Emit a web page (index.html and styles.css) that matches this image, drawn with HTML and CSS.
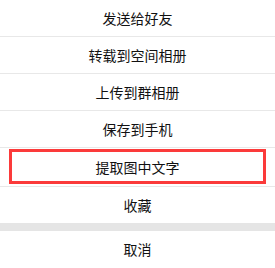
FILE: index.html
```html
<!DOCTYPE html>
<html lang="zh-CN">
<head>
    <meta charset="UTF-8">
    <meta name="viewport" content="width=device-width, initial-scale=1.0">
    <title>操作菜单</title>
    <link rel="stylesheet" href="styles.css">
</head>
<body>

<div class="sheet">
    <div class="sheet-group">
        <div class="sheet-item">发送给好友</div>
        <div class="sheet-item">转载到空间相册</div>
        <div class="sheet-item">上传到群相册</div>
        <div class="sheet-item">保存到手机</div>
        <div class="sheet-item marked">提取图中文字<span class="mark"></span></div>
        <div class="sheet-item">收藏</div>
    </div>
    <div class="sheet-gap"></div>
    <div class="sheet-group">
        <div class="sheet-item">取消</div>
    </div>
</div>

</body>
</html>
```

FILE: styles.css
```css
* {
    box-sizing: border-box;
}

body {
    margin: 0;
    background-color: #fff;
    font-family: "Noto Sans CJK SC", "Noto Sans", sans-serif;
}

.sheet {
    width: 275px;
    display: flex;
    flex-direction: column;
}

.sheet-item {
    height: 37px;
    display: flex;
    justify-content: center;
    align-items: center;
    font-size: 14px;
    color: #111;
    border-bottom: 1px solid #e8e8e8;
    background-color: #fff;
}

.sheet-group .sheet-item:last-child {
    border-bottom: none;
    height: 36px;
}

.sheet-item.marked {
    position: relative;
    height: 39px;
}

/* red highlight frame drawn over the row */
.mark {
    position: absolute;
    left: 9px;
    right: 9px;
    top: 1px;
    bottom: 2px;
    border: 3px solid #fb3a3a;
}

.sheet-gap {
    height: 8px;
    background-color: #e5e5e5;
}
```
